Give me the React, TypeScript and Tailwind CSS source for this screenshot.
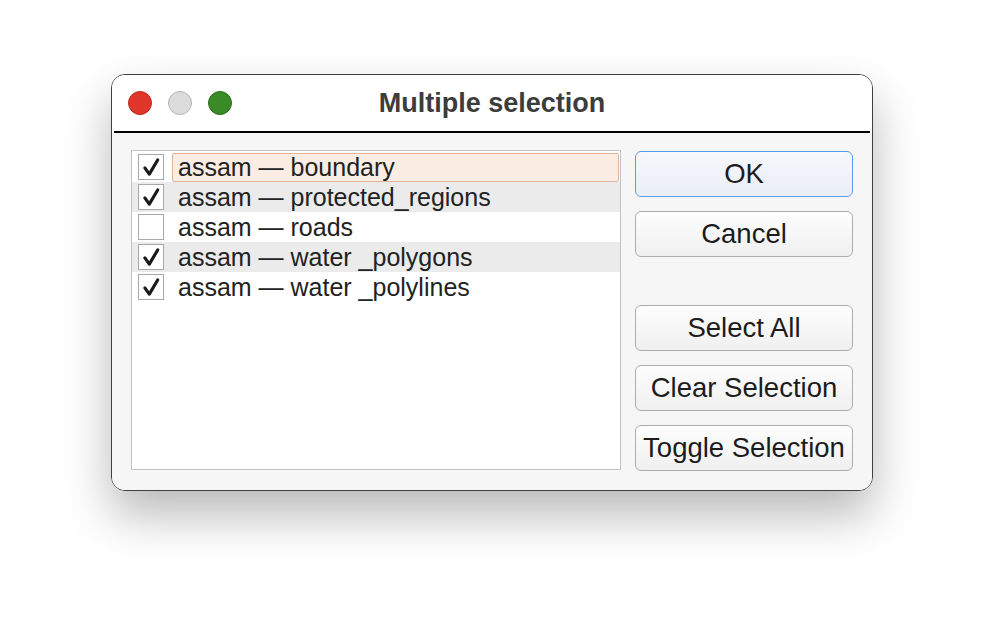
import React, { useState } from 'react';

type Layer = { name: string; checked: boolean };

const initialLayers: Layer[] = [
  { name: 'assam — boundary', checked: true },
  { name: 'assam — protected_regions', checked: true },
  { name: 'assam — roads', checked: false },
  { name: 'assam — water _polygons', checked: true },
  { name: 'assam — water _polylines', checked: true },
];

const CheckMark: React.FC = () => (
  <svg viewBox="0 0 26 26" className="w-[23px] h-[23px]">
    <path d="M5.5 13.5 L10.5 20.5 L20 4.5" fill="none" stroke="#1a1a1a" strokeWidth="3.6" strokeLinecap="round" strokeLinejoin="round" />
  </svg>
);

const DialogButton: React.FC<{ label: string; primary?: boolean; onClick?: () => void }> = ({ label, primary, onClick }) => (
  <button
    onClick={onClick}
    className={`h-[46px] w-full rounded-[6px] border-[1.5px] text-[27.5px] leading-none text-[#1c1c1c] ${
      primary
        ? 'border-[#5c9ce6] bg-gradient-to-b from-[#f6f8fb] to-[#e9eef5]'
        : 'border-[#adadad] bg-gradient-to-b from-[#fdfdfd] to-[#f0f0f0]'
    }`}
  >
    {label}
  </button>
);

const App: React.FC = () => {
  const [layers, setLayers] = useState<Layer[]>(initialLayers);
  const [current, setCurrent] = useState(0);

  const toggle = (i: number) =>
    setLayers(layers.map((l, idx) => (idx === i ? { ...l, checked: !l.checked } : l)));

  return (
    <div className="min-h-[638px] w-full bg-white pt-[74px]" style={{ fontFamily: '"Liberation Sans", Arial, sans-serif' }}>
      <div className="mx-auto w-[762px] h-[417px] rounded-[14px] border-[1.5px] border-[#3f3f3f] overflow-hidden flex flex-col shadow-[0_24px_48px_rgba(0,0,0,0.28)]">
        {/* Title bar */}
        <div className="relative h-[56px] bg-white flex items-center px-[16px] gap-[16px] shrink-0">
          <span className="w-[24px] h-[24px] rounded-full bg-[#e0352b] border border-[#c0271f]" />
          <span className="w-[24px] h-[24px] rounded-full bg-[#dcdcdc] border border-[#b4b4b4]" />
          <span className="w-[24px] h-[24px] rounded-full bg-[#3b8a28] border border-[#2b6c1d]" />
          <div className="absolute inset-0 flex items-center justify-center pointer-events-none">
            <span className="text-[27px] font-bold text-[#3c3c3c]">Multiple selection</span>
          </div>
        </div>
        <div className="h-[2px] bg-black mx-[2px] shrink-0" />

        {/* Body */}
        <div className="flex-1 bg-[#f6f6f6] flex pl-[19px] pr-[18px] pt-[17px] pb-[20px] gap-[14px]">
          <div className="w-[490px] h-[320px] bg-white border border-[#c3c3c3] pt-[1px]">
            {layers.map((layer, i) => (
              <div
                key={layer.name}
                onClick={() => setCurrent(i)}
                className={`h-[30px] flex items-center pl-[6px] pr-[1px] ${i % 2 === 1 ? 'bg-[#ebebeb]' : 'bg-white'}`}
              >
                <button
                  onClick={() => toggle(i)}
                  className="w-[26px] h-[26px] shrink-0 bg-white border-[1.5px] border-[#a8a8a8] flex items-center justify-center"
                >
                  {layer.checked && <CheckMark />}
                </button>
                <div
                  className={`ml-[8px] flex-1 h-[29px] flex items-center pl-[5px] rounded-[2px] border ${
                    current === i ? 'bg-[#fbede3] border-[#dcb59b]' : 'border-transparent'
                  }`}
                >
                  <span className="text-[25px] leading-none text-[#222222] whitespace-nowrap">{layer.name}</span>
                </div>
              </div>
            ))}
          </div>

          <div className="w-[218px] flex flex-col pt-[1px]">
            <DialogButton label="OK" primary />
            <div className="mt-[14px]">
              <DialogButton label="Cancel" />
            </div>
            <div className="mt-[48px] flex flex-col gap-[14px]">
              <DialogButton label="Select All" onClick={() => setLayers(layers.map((l) => ({ ...l, checked: true })))} />
              <DialogButton label="Clear Selection" onClick={() => setLayers(layers.map((l) => ({ ...l, checked: false })))} />
              <DialogButton label="Toggle Selection" onClick={() => setLayers(layers.map((l) => ({ ...l, checked: !l.checked })))} />
            </div>
          </div>
        </div>
      </div>
    </div>
  );
};

export default App;
